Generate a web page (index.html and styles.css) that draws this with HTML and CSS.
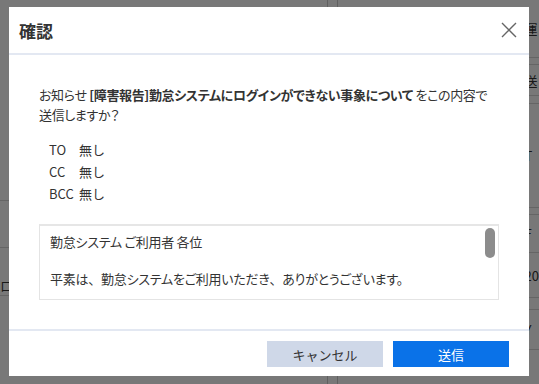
FILE: index.html
```html
<!DOCTYPE html>
<html lang="ja">
  <head>
    <meta charset="UTF-8" />
    <meta name="viewport" content="width=device-width, initial-scale=1.0" />
    <title>確認</title>
    <link rel="stylesheet" href="styles.css">
  </head>
  <body>
    <!-- underlying page, mostly hidden by the dialog -->
    <div class="page">
      <div class="page-list">
        <div class="list-row" style="height: 200px"></div>
        <div class="list-row" style="height: 46px"></div>
        <div class="list-row list-text">ロ</div>
      </div>
      <div class="page-detail">
        <div class="detail-row" style="height: 58px">運</div>
        <div class="detail-row" style="height: 7px"></div>
        <div class="detail-row" style="height: 31px">送</div>
        <div class="detail-row" style="height: 8px"></div>
        <div class="detail-row" style="height: 104px">T</div>
        <div class="detail-row" style="height: 7px"></div>
        <div class="detail-row" style="height: 38px">F</div>
        <div class="detail-row" style="height: 45px">20</div>
        <div class="detail-row" style="height: 12px"></div>
        <div class="detail-row detail-last">Y</div>
      </div>
    </div>

    <div class="overlay"></div>

    <div class="modal" role="dialog">
      <div class="modal-header">
        <h2 class="modal-title">確認</h2>
        <button class="modal-close" aria-label="閉じる">
          <svg width="16" height="16" viewBox="0 0 16 16">
            <path d="M1 1 L15 15 M15 1 L1 15" stroke="#666" stroke-width="1.4" fill="none" />
          </svg>
        </button>
      </div>

      <div class="modal-body">
        <p class="confirm-text">
          お知らせ <b>[障害報告]勤怠システムにログインができない事象について</b> をこの内容で送信しますか？
        </p>

        <div class="recipients">
          <span>TO</span><span>無し</span>
          <span>CC</span><span>無し</span>
          <span>BCC</span><span>無し</span>
        </div>

        <div class="mail-box">
          <div class="mail-body">
            <p>勤怠システム ご利用者 各位</p>
            <p>&nbsp;</p>
            <p>平素は<span class="wide">、</span>勤怠システムをご利用いただき<span class="wide">、</span>ありがとうございます。</p>
          </div>
          <!-- scroll position of the message -->
          <div class="scroll-thumb"></div>
        </div>
      </div>

      <div class="modal-footer">
        <button class="btn btn-cancel">キャンセル</button>
        <button class="btn btn-send">送信</button>
      </div>
    </div>
  </body>
</html>
```

FILE: styles.css
```css
body {
  margin: 0;
  width: 539px;
  height: 384px;
  overflow: hidden;
  font-family: "Noto Sans CJK JP", "Noto Sans", sans-serif;
  color: #333;
  background-color: #fff;
}

/* page behind the dialog */
.page {
  display: flex;
  height: 384px;
}

.page-list {
  width: 332px;
  border-right: 1px solid #ccc;
}

.list-row {
  border-bottom: 1px solid #d6d6d6;
}

.list-text {
  padding-top: 28px;
  font-size: 13px;
}

.page-detail {
  flex: 1;
  margin-left: 9px;
  border-left: 1px solid #ccc;
}

.detail-row {
  box-sizing: border-box;
  border-bottom: 1px solid #d6d6d6;
  padding-left: 187px;
  font-size: 13px;
  line-height: 1;
  display: flex;
  align-items: center;
  overflow: hidden;
  white-space: nowrap;
}

.detail-last {
  height: 40px;
}

.overlay {
  position: fixed;
  inset: 0;
  background-color: rgba(0, 0, 0, 0.53);
}

/* dialog */
.modal {
  position: fixed;
  left: 9px;
  top: 7px;
  width: 520px;
  height: 369px;
  background-color: #fff;
  display: flex;
  flex-direction: column;
}

.modal-header {
  height: 46px;
  padding: 0 12px 0 10px;
  display: flex;
  align-items: center;
  justify-content: space-between;
  border-bottom: 2px solid #e3e8f2;
}

.modal-title {
  margin: 0;
  font-size: 17px;
  font-weight: 700;
  color: #333;
}

.modal-close {
  border: none;
  background: none;
  padding: 0;
  width: 16px;
  height: 16px;
  display: flex;
  cursor: pointer;
}

.modal-body {
  flex: 1;
  padding: 30px 30px 0 30px;
  font-size: 13px;
}

.confirm-text {
  margin: 0;
  line-height: 20px;
  font-feature-settings: "palt";
  letter-spacing: -0.35px;
}

.confirm-text b {
  font-weight: 700;
}

.recipients {
  display: grid;
  grid-template-columns: 30px 1fr;
  line-height: 22px;
  margin-top: 14px;
  padding-left: 10px;
}

.mail-box {
  position: relative;
  margin-top: 19px;
  height: 73px;
  border: 1px solid #e4e4e4;
  border-top: 2px solid #e6e6e6;
  overflow: hidden;
}

.mail-body {
  padding: 7px 20px 0 10px;
  line-height: 18.5px;
  font-feature-settings: "palt";
  letter-spacing: -0.25px;
}

.mail-body p {
  margin: 0;
  white-space: nowrap;
}

.mail-body .wide {
  font-feature-settings: normal;
}

.scroll-thumb {
  position: absolute;
  top: 2px;
  right: 3px;
  width: 10px;
  height: 30px;
  border-radius: 5px;
  background-color: #8c8c8c;
}

.modal-footer {
  border-top: 2px solid #e3e8f2;
  padding: 10px 20px 9px 0;
  display: flex;
  justify-content: flex-end;
  gap: 10px;
}

.btn {
  width: 116px;
  height: 26px;
  border: none;
  font-family: inherit;
  font-size: 13px;
  cursor: pointer;
}

.btn-cancel {
  background-color: #cfd8e8;
  color: #333;
}

.btn-send {
  background-color: #0a72e8;
  color: #fff;
}
```
